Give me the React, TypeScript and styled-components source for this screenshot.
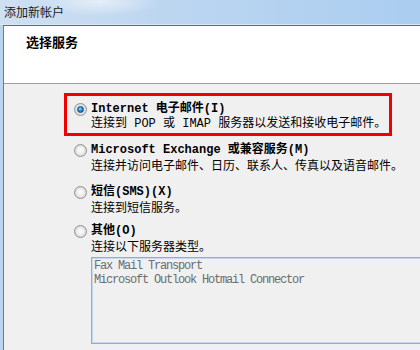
import React from "react";
import styled, { createGlobalStyle } from "styled-components";

const Global = createGlobalStyle`
  html, body { margin: 0; padding: 0; background: #f0f0f0; }
  body { font-family: "Liberation Mono", "Noto Sans CJK SC", monospace; }
`;

const Window = styled.div`
  width: 420px;
  height: 350px;
  overflow: hidden;
  display: flex;
  flex-direction: column;
  background: #bcd5ee;
`;

const TitleBar = styled.div`
  height: 24px;
  flex: none;
  display: flex;
  align-items: center;
  padding-left: 4px;
  background:
    radial-gradient(ellipse 60px 14px at 100px 2px, rgba(255,255,255,0.55), rgba(255,255,255,0) 100%),
    linear-gradient(to right, #cfe0f2 0%, #bcd6f0 40%, #aacdf0 100%);
  border-bottom: 1px solid #dbe8f5;
  font-family: "Noto Sans CJK SC", sans-serif;
  font-size: 12px;
  color: #1a1a1a;
  line-height: 24px;
`;

const Frame = styled.div`
  flex: 1;
  display: flex;
  padding-left: 3px;
  min-height: 0;
`;

const Client = styled.div`
  flex: 1;
  display: flex;
  flex-direction: column;
  background: #f0f0f0;
  border-top: 1px solid #5b6b87;
  border-left: 1px solid #6b7b95;
  min-width: 0;
`;

const Header = styled.div`
  height: 58px;
  flex: none;
  background: #ffffff;
  border-bottom: 1px solid #a0a0a0;
  padding: 8px 0 0 22px;
  box-sizing: border-box;
`;

const Heading = styled.div`
  font-family: "Noto Sans CJK SC", sans-serif;
  font-weight: bold;
  font-size: 13px;
  line-height: 16px;
  color: #000;
`;

const Body = styled.div`
  flex: 1;
  display: flex;
  flex-direction: column;
  padding: 9px 0 0 60px;
`;

const Option = styled.div<{ $highlight?: boolean; $top: number }>`
  width: 328px;
  box-sizing: border-box;
  margin-top: ${(p) => p.$top}px;
  ${(p) =>
    p.$highlight
      ? `border: 3px solid #f00000; padding: 5px 0 1px 7px;`
      : `border: none; padding: 0 0 0 10px;`}
  display: flex;
  flex-direction: column;
`;

const LabelRow = styled.div`
  display: flex;
  align-items: center;
  gap: 4px;
  height: 16px;
`;

const Radio = styled.span<{ $checked?: boolean }>`
  width: 13px;
  height: 13px;
  flex: none;
  box-sizing: border-box;
  border-radius: 50%;
  border: 1px solid #8f9192;
  background: radial-gradient(circle at 50% 50%, #f6f6f6 0%, #e6e6e6 45%, #d3d3d3 100%);
  display: flex;
  align-items: center;
  justify-content: center;
  &::after {
    content: "";
    width: 7px;
    height: 7px;
    border-radius: 50%;
    box-sizing: border-box;
    ${(p) =>
      p.$checked
        ? `background: radial-gradient(circle at 40% 35%, #8fd4fb 0%, #2e8fde 45%, #0f4d93 100%); border: 1px solid #1b4a7d;`
        : `background: radial-gradient(circle at 50% 40%, #fbfbfb 0%, #ebebeb 100%);`}
  }
`;

const Label = styled.span`
  font-weight: bold;
  font-size: 12px;
  line-height: 16px;
  color: #000;
  white-space: pre;
`;

const Desc = styled.div<{ $gap: number }>`
  margin-top: ${(p) => p.$gap}px;
  padding-left: 17px;
  font-size: 12px;
  line-height: 15px;
  color: #000;
  white-space: pre;
`;

const ListBox = styled.div`
  margin: 1px 0 0 17px;
  width: 340px;
  height: 87px;
  box-sizing: border-box;
  border: 1px solid #a3abb7;
  box-shadow: inset 0 0 0 1px #c3d7ee;
  padding: 1px 0 0 2px;
  font-size: 12px;
  letter-spacing: -1.2px;
  line-height: 14px;
  color: #6d6d6d;
  white-space: pre;
`;

type Item = {
  label: string;
  desc: string;
  checked?: boolean;
  top: number;
  gap: number;
  list?: string[];
};

const items: Item[] = [
  { label: "Internet 电子邮件(I)", desc: "连接到 POP 或 IMAP 服务器以发送和接收电子邮件。", checked: true, top: 0, gap: 0 },
  { label: "Microsoft Exchange 或兼容服务(M)", desc: "连接并访问电子邮件、日历、联系人、传真以及语音邮件。", top: 6, gap: 2 },
  { label: "短信(SMS)(X)", desc: "连接到短信服务。", top: 9, gap: 2 },
  {
    label: "其他(O)",
    desc: "连接以下服务器类型。",
    top: 6,
    gap: 2,
    list: ["Fax Mail Transport", "Microsoft Outlook Hotmail Connector"],
  },
];

export default function App() {
  return (
    <>
      <Global />
      <Window>
        <TitleBar>添加新帐户</TitleBar>
        <Frame>
          <Client>
            <Header>
              <Heading>选择服务</Heading>
            </Header>
            <Body>
              {items.map((it, i) => (
                <Option key={i} $highlight={i === 0} $top={it.top}>
                  <LabelRow>
                    <Radio $checked={it.checked} />
                    <Label>{it.label}</Label>
                  </LabelRow>
                  <Desc $gap={it.gap}>{it.desc}</Desc>
                  {it.list && (
                    <ListBox>
                      {it.list.map((l) => (
                        <div key={l}>{l}</div>
                      ))}
                    </ListBox>
                  )}
                </Option>
              ))}
            </Body>
          </Client>
        </Frame>
      </Window>
    </>
  );
}
